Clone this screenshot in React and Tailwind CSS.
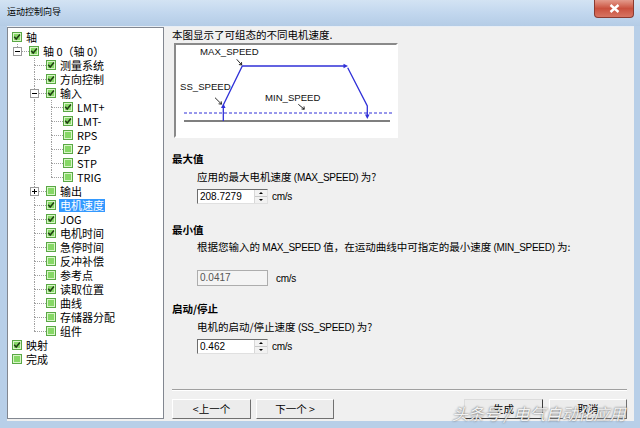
import React from "react";

const tree = [
  { label: "轴", level: 0, checked: true },
  { label: "轴 0（轴 0）", level: 1, checked: true, exp: "-", guides: [], more: false },
  { label: "测量系统", level: 2, checked: true, guides: [false], more: true },
  { label: "方向控制", level: 2, checked: true, guides: [false], more: true },
  { label: "输入", level: 2, checked: true, exp: "-", guides: [false], more: true },
  { label: "LMT+", level: 3, checked: true, guides: [false, true], more: true },
  { label: "LMT-", level: 3, checked: true, guides: [false, true], more: true },
  { label: "RPS", level: 3, checked: false, guides: [false, true], more: true },
  { label: "ZP", level: 3, checked: false, guides: [false, true], more: true },
  { label: "STP", level: 3, checked: false, guides: [false, true], more: true },
  { label: "TRIG", level: 3, checked: false, guides: [false, true], more: false },
  { label: "输出", level: 2, checked: false, exp: "+", guides: [false], more: true },
  { label: "电机速度", level: 2, checked: true, selected: true, guides: [false], more: true },
  { label: "JOG", level: 2, checked: true, guides: [false], more: true },
  { label: "电机时间", level: 2, checked: true, guides: [false], more: true },
  { label: "急停时间", level: 2, checked: false, guides: [false], more: true },
  { label: "反冲补偿", level: 2, checked: false, guides: [false], more: true },
  { label: "参考点", level: 2, checked: false, guides: [false], more: true },
  { label: "读取位置", level: 2, checked: true, guides: [false], more: true },
  { label: "曲线", level: 2, checked: false, guides: [false], more: true },
  { label: "存储器分配", level: 2, checked: false, guides: [false], more: true },
  { label: "组件", level: 2, checked: false, guides: [false], more: false },
  { label: "映射", level: 0, checked: true },
  { label: "完成", level: 0, checked: false },
];

function Check({ checked }) {
  return (
    <svg width="10" height="10" viewBox="0 0 10 10" className="shrink-0">
      <rect x="0.5" y="0.5" width="9" height="9" fill="#d9f5c8" stroke="#5aa845" />
      <rect x="2" y="2" width="6" height="6" fill="#86d866" />
      {checked && <path d="M2.2 4.8 L4.2 7 L7.9 2.6" fill="none" stroke="#1f3d14" strokeWidth="1.5" />}
    </svg>
  );
}

function Expander({ sign }) {
  return (
    <span className="absolute left-[1px] top-[3px] w-[9px] h-[9px] border border-[#9a9a9a] bg-white flex items-center justify-center">
      <span className="absolute left-[1px] top-[3px] w-[5px] h-[1px] bg-black" />
      {sign === "+" && <span className="absolute left-[3px] top-[1px] w-[1px] h-[5px] bg-black" />}
    </span>
  );
}

function TreeRow({ row }) {
  return (
    <div className="flex items-center h-[14px]">
      {row.level > 0 &&
        row.guides.map((g, i) => (
          <span key={i} className="relative w-[17px] h-[14px] shrink-0">
            {g && <span className="absolute left-[5px] top-0 h-[14px] border-l border-dotted border-[#a0a0a0]" />}
          </span>
        ))}
      {row.level > 0 && (
        <span className="relative w-[17px] h-[14px] shrink-0">
          <span className="absolute left-[5px] top-0 h-[7px] border-l border-dotted border-[#a0a0a0]" />
          {row.more && <span className="absolute left-[5px] top-[7px] h-[7px] border-l border-dotted border-[#a0a0a0]" />}
          <span className="absolute left-[5px] top-[7px] w-[12px] border-t border-dotted border-[#a0a0a0]" />
          {row.exp && <Expander sign={row.exp} />}
        </span>
      )}
      <Check checked={row.checked} />
      <span
        className={
          "ml-[3px] px-[1px] h-[13px] leading-[13px] whitespace-nowrap " +
          (row.selected ? "bg-[#3399ff] text-white" : "text-black")
        }
      >
        {row.label}
      </span>
    </div>
  );
}

// narrow latin run inside CJK text
function L({ children }) {
  return <span className="font-['Liberation_Sans',sans-serif] text-[10px] tracking-[-0.3px]">{children}</span>;
}

function SpinInput({ value }) {
  return (
    <div className="flex h-[15px] w-[71px] bg-white border-t border-l border-[#6d6d6d] border-r border-r-[#e0e0e0] border-b border-b-[#e0e0e0]">
      <span className="flex-1 pl-[2px] leading-[14px] text-[10px] font-['Liberation_Sans',sans-serif]">{value}</span>
      <span className="w-[13px] flex flex-col border-l border-[#d8d8d8]">
        <span className="flex-1 flex items-center justify-center bg-[#f2f2f2] border-b border-[#c8c8c8]">
          <span className="w-0 h-0 border-l-[2px] border-r-[2px] border-b-[2px] border-l-transparent border-r-transparent border-b-black" />
        </span>
        <span className="flex-1 flex items-center justify-center bg-[#f2f2f2]">
          <span className="w-0 h-0 border-l-[2px] border-r-[2px] border-t-[2px] border-l-transparent border-r-transparent border-t-black" />
        </span>
      </span>
    </div>
  );
}

function Diagram() {
  const blue = "#3030d8";
  return (
    <svg width="220" height="91" viewBox="0 0 220 91">
      <line x1="8" y1="76" x2="214" y2="76" stroke="#555" strokeWidth="1.5" />
      <line x1="8" y1="68" x2="216" y2="68" stroke={blue} strokeWidth="1" strokeDasharray="3 2" />
      <path d="M47.3 76 L47.3 62 M47.3 60 L66.3 21 L169 21 M171.7 22.7 L191.3 61 L191.3 71" fill="none" stroke={blue} strokeWidth="1.3" />
      <path d="M47.3 58.5 L45 63 L49.6 63 Z" fill={blue} />
      <path d="M172 21 L167.5 18.8 L167.5 23.2 Z" fill={blue} />
      <path d="M191.3 74 L189 69.5 L193.6 69.5 Z" fill={blue} />
      <path d="M39 52.7 L45.2 58.8 M45.5 59.2 L42.6 58.8 M45.5 59.2 L45.2 56.3" stroke="#111" strokeWidth="0.9" fill="none" />
      <path d="M60.7 14.3 L65.4 19.6 M65.7 20 L62.9 19.5 M65.7 20 L65.5 17.1" stroke="#111" strokeWidth="0.9" fill="none" />
      <path d="M122.3 59.3 L128 64 M128.3 64.3 L125.5 64 M128.3 64.3 L128 61.4" stroke="#111" strokeWidth="0.9" fill="none" />
      <g fontFamily="'Liberation Sans', sans-serif" fontSize="9.6" fill="#111">
        <text x="24" y="10.3">MAX_SPEED</text>
        <text x="4" y="45.3">SS_SPEED</text>
        <text x="89" y="56.3">MIN_SPEED</text>
      </g>
    </svg>
  );
}

function Btn({ children, w, primary }) {
  return (
    <button
      className={
        "h-[20px] text-[10.5px] leading-[18px] text-black bg-[#ececec] border " +
        (primary
          ? "border-[#3c3c3c] border-t-[#dcdcdc] border-l-[#dcdcdc] "
          : "border-t-white border-l-white border-r-[#707070] border-b-[#707070] ") +
        w
      }
    >
      {children}
    </button>
  );
}

export default function App() {
  return (
    <div className="w-[640px] h-[428px] overflow-hidden relative flex flex-col bg-[#b8cfe8] font-['Noto_Sans_CJK_SC',sans-serif] text-[10.5px] text-black">
      {/* title bar */}
      <div className="h-[26px] shrink-0 flex items-start bg-gradient-to-b from-[#d3e3f3] via-[#c2d7ee] to-[#b4cce6]">
        <span className="ml-[7px] mt-[5px] text-[9px] leading-[14px] text-black">运动控制向导</span>
        <div className="ml-auto mr-[6px] w-[40px] h-[18px] rounded-b-[4px] border border-t-0 border-[#8a3a30] bg-gradient-to-b from-[#e39a8c] via-[#c9503e] to-[#d77462] flex items-center justify-center">
          <svg width="11" height="9" viewBox="0 0 11 9">
            <path d="M1.5 1 L9.5 8 M9.5 1 L1.5 8" stroke="white" strokeWidth="2.4" />
          </svg>
        </div>
      </div>

      {/* body */}
      <div className="flex-1 flex pl-[7px] pr-[6px] pb-[7px]">
        <div className="flex-1 flex bg-[#f0f0f0] border-t border-[#e8eef5]">
          {/* tree */}
          <div className="w-[157px] mb-[2px] bg-white border border-[#828790] pl-[4px] pt-[2px] text-[11px]">
            {tree.map((r, i) => (
              <TreeRow key={i} row={r} />
            ))}
          </div>

          {/* right pane */}
          <div className="flex-1 flex flex-col pl-[8px] pr-[7px] pt-[1px]">
            <p className="leading-[14px]">本图显示了可组态的不同电机速度.</p>
            <div className="ml-[2px] mt-[1px] w-[224px] h-[95px] bg-white border-2 border-t-[#8a8a8a] border-l-[#8a8a8a] border-r-white border-b-white">
              <Diagram />
            </div>

            <p className="mt-[14px] leading-[14px] font-bold">最大值</p>
            <div className="ml-[25px]">
              <p className="mt-[4px] leading-[14px]">
                应用的最大电机速度 <L>(MAX_SPEED)</L> 为?
              </p>
              <div className="mt-[3px] flex items-center">
                <SpinInput value="208.7279" />
                <span className="ml-[4px]"><L>cm/s</L></span>
              </div>
            </div>

            <p className="mt-[19px] leading-[14px] font-bold">最小值</p>
            <div className="ml-[25px]">
              <p className="mt-[3px] leading-[14px] whitespace-nowrap">
                根据您输入的 <L>MAX_SPEED</L> 值，在运动曲线中可指定的最小速度 <L>(MIN_SPEED)</L> 为:
              </p>
              <div className="mt-[15px] flex items-center">
                <div className="w-[71px] h-[16px] bg-[#f4f4f4] border border-[#adadad] pl-[2px] leading-[14px] text-[10px] text-[#555] font-['Liberation_Sans',sans-serif]">
                  0.0417
                </div>
                <span className="ml-[8px]"><L>cm/s</L></span>
              </div>
            </div>

            <p className="mt-[16px] leading-[14px] font-bold">启动/停止</p>
            <div className="ml-[25px]">
              <p className="mt-[4px] leading-[14px]">
                电机的启动/停止速度 <L>(SS_SPEED)</L> 为?
              </p>
              <div className="mt-[3px] flex items-center">
                <SpinInput value="0.462" />
                <span className="ml-[4px]"><L>cm/s</L></span>
              </div>
            </div>

            <div className="mt-[35px] border-t border-[#a0a0a0] border-b border-b-white" />

            <div className="mt-[8px] flex">
              <Btn w="w-[79px]">&lt;上一个</Btn>
              <Btn w="w-[78px] ml-[5px]">下一个 &gt;</Btn>
              <Btn w="w-[79px] ml-auto" primary>生成</Btn>
              <Btn w="w-[78px] ml-[6px]">取消</Btn>
            </div>
          </div>
        </div>
      </div>

      {/* watermark */}
      <span className="absolute left-[452px] top-[403px] text-[16px] leading-[20px] italic text-[#f2f2f2] [text-shadow:0_0_2px_#4a4a4a] whitespace-nowrap">
        头条号 / 电气自动化应用
      </span>
    </div>
  );
}
